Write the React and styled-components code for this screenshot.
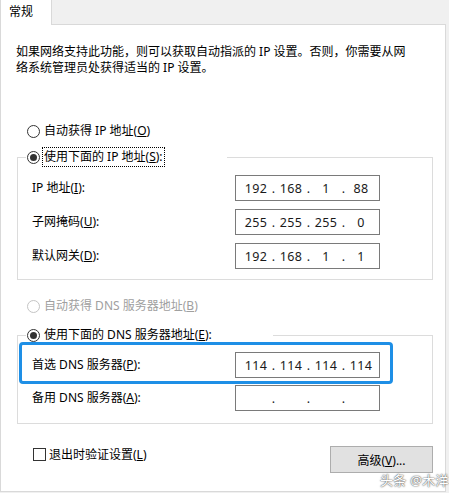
import React from 'react'
import styled, { createGlobalStyle } from 'styled-components'

const GlobalStyle = createGlobalStyle`
  html, body {
    margin: 0;
    padding: 0;
    background: #f0f0f0;
  }
  body {
    font-family: "Noto Sans", "Noto Sans CJK SC", sans-serif;
    font-size: 12px;
    color: #000;
  }
`

const Window = styled.div`
  position: relative;
  width: 449px;
  height: 493px;
  background: #f0f0f0;
`

const TabStrip = styled.div`
  display: flex;
  height: 24px;
`

const Tab = styled.div`
  position: relative;
  z-index: 1;
  box-sizing: border-box;
  width: 52px;
  height: 25px;
  padding: 3px 0 0 8px;
  background: #fff;
  border: 1px solid #d9d9d9;
  border-top: none;
  border-bottom: none;
  line-height: 18px;
`

const Panel = styled.div`
  box-sizing: border-box;
  width: 446px;
  height: 468px;
  background: #fff;
  border: 1px solid #d9d9d9;
  padding-top: 19px;
`

const Description = styled.p`
  margin: 0 0 0 15px;
  width: 400px;
  line-height: 16px;
`

const RadioRow = styled.div`
  display: flex;
  align-items: center;
  height: ${({ $tall }) => ($tall ? '20px' : '16px')};
  margin-top: ${({ $top }) => $top || 0}px;
  margin-left: ${({ $inset }) => ($inset ? 1 : 26)}px;
  width: ${({ $width }) => ($width ? `${$width}px` : 'auto')};
  color: ${({ $disabled }) => ($disabled ? '#a0a0a0' : '#000')};
`

const Circle = styled.span`
  box-sizing: border-box;
  width: 13px;
  height: 13px;
  border-radius: 50%;
  border: 1px solid ${({ $disabled }) => ($disabled ? '#c4c4c4' : '#333')};
  background: #fff;
  display: flex;
  align-items: center;
  justify-content: center;
  flex-shrink: 0;

  &::after {
    content: '';
    display: ${({ $checked }) => ($checked ? 'block' : 'none')};
    width: 7px;
    height: 7px;
    border-radius: 50%;
    background: #333;
  }
`

const RadioText = styled.span`
  margin-left: 2px;
  padding: 0 1px;
  line-height: 18px;
  border: 1px ${({ $focused }) => ($focused ? 'dotted #000' : 'solid transparent')};
  white-space: nowrap;
`

const GroupBox = styled.fieldset`
  box-sizing: border-box;
  width: 416px;
  margin: ${({ $top }) => $top}px 0 0 16px;
  padding: 0;
  border: 1px solid #dcdcdc;
  min-width: 0;
`

const Legend = styled.legend`
  margin-left: 8px;
  padding: 0;
  background: #fff;
`

const Rows = styled.div`
  display: flex;
  flex-direction: column;
  gap: ${({ $gap }) => $gap}px;
  padding: ${({ $top }) => $top}px 0 ${({ $bottom }) => $bottom}px 14px;
`

const FieldRow = styled.div`
  position: relative;
  display: grid;
  grid-template-columns: 203px 145px;
  align-items: center;
  width: 348px;

  &::after {
    content: '';
    display: ${({ $highlight }) => ($highlight ? 'block' : 'none')};
    position: absolute;
    top: -10px;
    bottom: -6px;
    left: -13px;
    right: -13px;
    border: 3px solid #1e8fe6;
    border-radius: 4px;
    pointer-events: none;
  }
`

const FieldLabel = styled.span`
  line-height: 16px;
  white-space: nowrap;
`

const IpBox = styled.div`
  box-sizing: border-box;
  height: 26px;
  border: 1px solid #7a7a7a;
  padding: 0 4px 0 6px;
  display: grid;
  grid-template-columns: 28px 7px 28px 7px 28px 7px 28px;
  align-items: center;
  font-size: 12.5px;
  color: #1a1a1a;
`

const IpPart = styled.span`
  text-align: center;
  letter-spacing: 0.3px;
`

const IpDot = styled.span`
  text-align: center;
`

const BottomRow = styled.div`
  display: flex;
  justify-content: space-between;
  align-items: flex-start;
  margin: 22px 0 0 16px;
  width: 416px;
`

const CheckRow = styled.label`
  display: flex;
  align-items: center;
  height: 16px;
  margin-left: 16px;
`

const CheckBox = styled.span`
  box-sizing: border-box;
  width: 13px;
  height: 13px;
  border: 1px solid #333;
  background: #fff;
  margin-right: 3px;
`

const Button = styled.button`
  box-sizing: border-box;
  width: 103px;
  height: 27px;
  background: #e1e1e1;
  border: 1px solid #adadad;
  font: inherit;
  color: #000;
  padding: 0;
`

const Watermark = styled.span`
  position: absolute;
  left: 380px;
  top: 472px;
  font-size: 13px;
  line-height: 16px;
  color: #fff;
  text-shadow: 0 0 1px #444, 0 0 2px #666;
  letter-spacing: 0.3px;
`

function Radio({ checked, disabled, focused, children }) {
  return (
    <>
      <Circle $checked={checked} $disabled={disabled} />
      <RadioText $focused={focused}>{children}</RadioText>
    </>
  )
}

function IpField({ parts }) {
  return (
    <IpBox>
      {parts.map((p, i) => (
        <React.Fragment key={i}>
          {i > 0 && <IpDot>.</IpDot>}
          <IpPart>{p}</IpPart>
        </React.Fragment>
      ))}
    </IpBox>
  )
}

const ipRows = [
  { label: 'IP 地址', key: 'I', parts: ['192', '168', '1', '88'] },
  { label: '子网掩码', key: 'U', parts: ['255', '255', '255', '0'] },
  { label: '默认网关', key: 'D', parts: ['192', '168', '1', '1'] },
]

const dnsRows = [
  { label: '首选 DNS 服务器', key: 'P', parts: ['114', '114', '114', '114'], highlight: true },
  { label: '备用 DNS 服务器', key: 'A', parts: ['', '', '', ''] },
]

export default function App() {
  return (
    <Window>
      <GlobalStyle />
      <TabStrip>
        <Tab>常规</Tab>
      </TabStrip>
      <Panel>
        <Description>
          如果网络支持此功能，则可以获取自动指派的 IP 设置。否则，你需要从网络系统管理员处获得适当的 IP 设置。
        </Description>

        <RadioRow $top={47}>
          <Radio>自动获得 IP 地址(<u>O</u>)</Radio>
        </RadioRow>

        <GroupBox $top={8}>
          <Legend>
            <RadioRow $inset $tall $width={200}>
              <Radio checked focused>使用下面的 IP 地址(<u>S</u>):</Radio>
            </RadioRow>
          </Legend>
          <Rows $gap={8} $top={8} $bottom={10}>
            {ipRows.map((r) => (
              <FieldRow key={r.key}>
                <FieldLabel>{r.label}(<u>{r.key}</u>):</FieldLabel>
                <IpField parts={r.parts} />
              </FieldRow>
            ))}
          </Rows>
        </GroupBox>

        <RadioRow $top={18} $disabled>
          <Radio disabled>自动获得 DNS 服务器地址(<u>B</u>)</Radio>
        </RadioRow>

        <GroupBox $top={11}>
          <Legend>
            <RadioRow $inset $tall $width={246}>
              <Radio checked>使用下面的 DNS 服务器地址(<u>E</u>):</Radio>
            </RadioRow>
          </Legend>
          <Rows $gap={7} $top={7} $bottom={12}>
            {dnsRows.map((r) => (
              <FieldRow key={r.key} $highlight={r.highlight}>
                <FieldLabel>{r.label}(<u>{r.key}</u>):</FieldLabel>
                <IpField parts={r.parts} />
              </FieldRow>
            ))}
          </Rows>
        </GroupBox>

        <BottomRow>
          <CheckRow>
            <CheckBox />
            退出时验证设置(<u>L</u>)
          </CheckRow>
          <Button>高级(<u>V</u>)...</Button>
        </BottomRow>
      </Panel>
      <Watermark>头条 @木洋</Watermark>
    </Window>
  )
}
